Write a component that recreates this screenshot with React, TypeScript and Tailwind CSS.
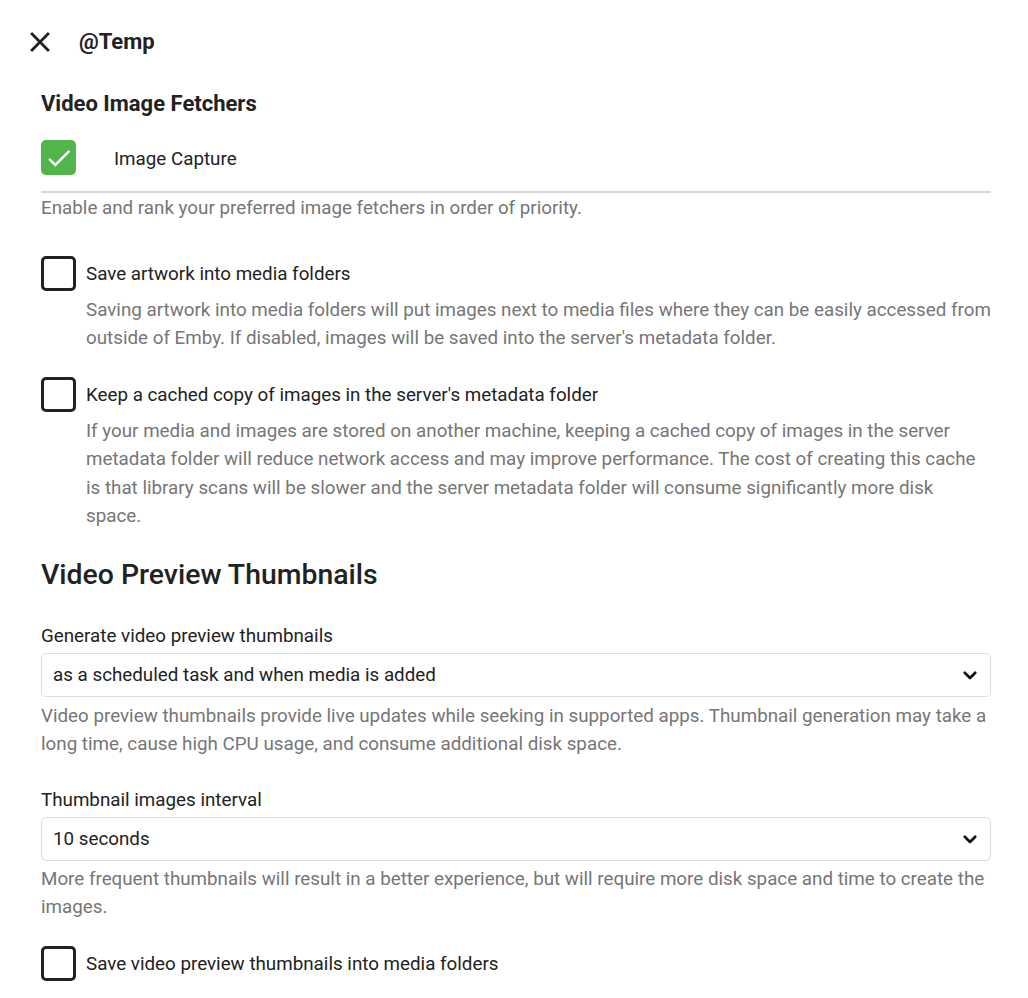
import React from 'react';

const CheckIcon = () => (
  <svg viewBox="0 0 24 24" className="w-[30px] h-[30px] fill-white">
    <path d="M9 16.17L4.83 12l-1.42 1.41L9 19 21 7l-1.41-1.41z" />
  </svg>
);

const CloseIcon = () => (
  <svg viewBox="0 0 24 24" className="w-[34px] h-[34px] fill-[#222]">
    <path d="M19 6.41L17.59 5 12 10.59 6.41 5 5 6.41 10.59 12 5 17.59 6.41 19 12 13.41 17.59 19 19 17.59 13.41 12z" />
  </svg>
);

const ChevronIcon = () => (
  <svg viewBox="0 0 24 24" className="w-[18px] h-[18px]" fill="none" stroke="#111" strokeWidth={3.6} strokeLinecap="round" strokeLinejoin="round">
    <path d="M5 9l7 7 7-7" />
  </svg>
);

const CheckRow = ({ label, desc, className = '' }: { label: string; desc?: string; className?: string }) => (
  <div className={`flex gap-[10px] ${className}`}>
    <div className="w-[35px] h-[35px] shrink-0 rounded-[5px] border-[3px] border-[#222]" />
    <div className="flex flex-col">
      <div className="mt-[4px] text-[18.8px] leading-[28px] text-[#222]">{label}</div>
      {desc && <p className="mt-[8px] text-[18.8px] leading-[28.4px] text-[#767676]">{desc}</p>}
    </div>
  </div>
);

const SelectBox = ({ value }: { value: string }) => (
  <div className="mt-[5px] h-[44px] flex items-center justify-between pl-[11px] pr-[11px] border border-[#ddd] rounded-[5px] text-[18.8px] text-[#222]">
    <span>{value}</span>
    <ChevronIcon />
  </div>
);

export default function App() {
  return (
    <div className="w-[1028px] min-h-[998px] bg-white pl-[41px] pr-[37px] font-['Roboto',sans-serif] text-[#222]">
      {/* Header */}
      <div className="pt-[23px] h-[60px] flex items-center -ml-[18px]">
        <CloseIcon />
        <span className="ml-[22px] text-[22px] font-bold">@Temp</span>
      </div>

      <h2 className="mt-[30px] text-[22px] leading-[28px] font-bold">Video Image Fetchers</h2>

      <div className="mt-[22px] flex items-center">
        <div className="w-[35px] h-[35px] rounded-[5px] bg-[#52b54b] flex items-center justify-center">
          <CheckIcon />
        </div>
        <span className="ml-[38px] pt-[3px] text-[18.8px]">Image Capture</span>
      </div>
      <div className="mt-[16px] h-[2px] bg-[#d8d8d8]" />
      <p className="mt-[3px] text-[18.8px] leading-[24px] text-[#767676]">
        Enable and rank your preferred image fetchers in order of priority.
      </p>

      <CheckRow
        className="mt-[36px]"
        label="Save artwork into media folders"
        desc="Saving artwork into media folders will put images next to media files where they can be easily accessed from outside of Emby. If disabled, images will be saved into the server's metadata folder."
      />
      <CheckRow
        className="mt-[24px]"
        label="Keep a cached copy of images in the server's metadata folder"
        desc="If your media and images are stored on another machine, keeping a cached copy of images in the server metadata folder will reduce network access and may improve performance. The cost of creating this cache is that library scans will be slower and the server metadata folder will consume significantly more disk space."
      />

      <h2 className="mt-[27px] text-[28.4px] leading-[36px] font-medium">Video Preview Thumbnails</h2>

      <div className="mt-[31px] text-[18.8px] leading-[24px]">Generate video preview thumbnails</div>
      <SelectBox value="as a scheduled task and when media is added" />
      <p className="mt-[5px] text-[18.8px] leading-[28px] text-[#767676]">
        Video preview thumbnails provide live updates while seeking in supported apps. Thumbnail generation may take a long time, cause high CPU usage, and consume additional disk space.
      </p>

      <div className="mt-[30px] text-[18.8px] leading-[24px]">Thumbnail images interval</div>
      <SelectBox value="10 seconds" />
      <p className="mt-[4px] text-[18.8px] leading-[28px] text-[#767676]">
        More frequent thumbnails will result in a better experience, but will require more disk space and time to create the images.
      </p>

      <CheckRow className="mt-[25px]" label="Save video preview thumbnails into media folders" />
    </div>
  );
}
